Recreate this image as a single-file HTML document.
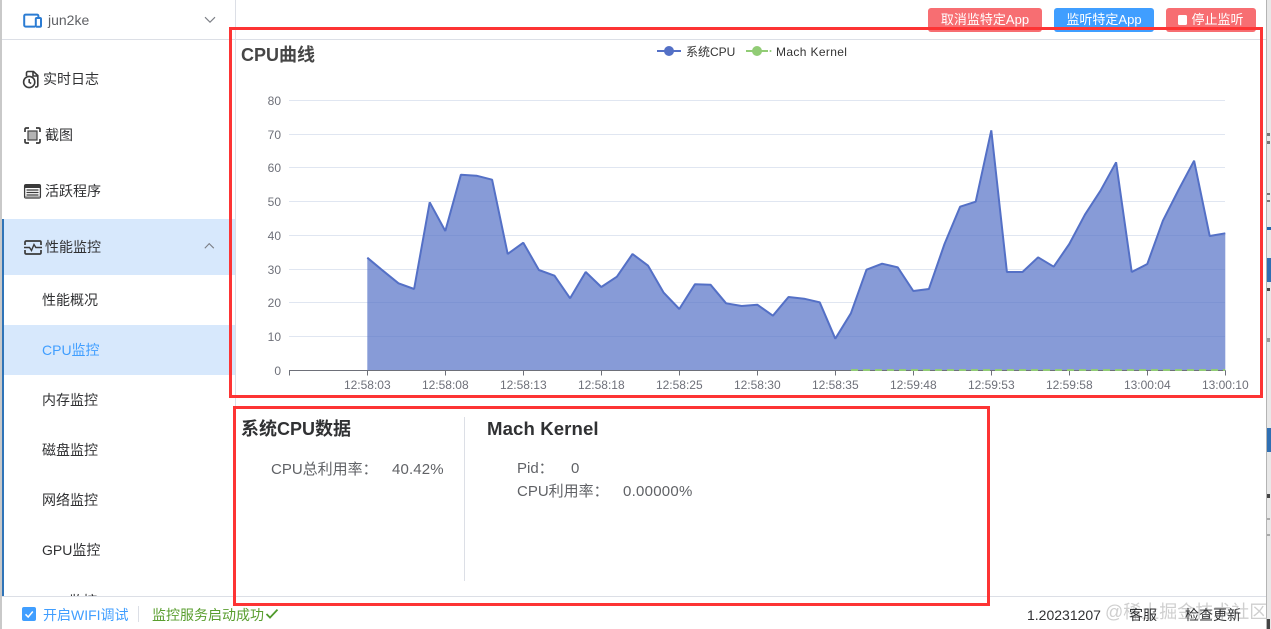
<!DOCTYPE html>
<html lang="zh"><head><meta charset="utf-8"><title>CPU监控</title>
<style>
html,body{margin:0;padding:0;width:1271px;height:629px;overflow:hidden;background:#fff}
body{position:relative;font-family:"Liberation Sans","Noto Sans CJK SC",sans-serif;font-size:14px;color:#303133}
.a{position:absolute}
.t{position:absolute;white-space:nowrap;line-height:20px;height:20px}
.btn{position:absolute;top:8px;height:24px;line-height:24px;border-radius:3px;color:#fff;font-size:13px;text-align:center;white-space:nowrap}
.h{font-size:18px;font-weight:bold;color:#303133}
.g{color:#606266;font-size:15px}
.bits{position:absolute;left:1267px;width:3px;background:#777}
svg{position:absolute;overflow:visible}
svg text{font-family:"Liberation Sans","Noto Sans CJK SC",sans-serif}
</style></head><body>

<!-- behind-window edges -->
<div class="a" style="left:0;top:0;width:2px;height:629px;background:#c9c9c9"></div>
<div class="a" style="left:2px;top:219px;width:2px;height:377px;background:#2f74b8"></div>
<div class="a" style="left:1266px;top:0;width:5px;height:629px;background:#e8e8e8;border-left:1px solid #b4b4b4;box-sizing:border-box"></div>
<div class="a" style="left:1267px;top:227px;width:4px;height:3px;background:#1f66ad"></div>
<div class="a" style="left:1267px;top:258px;width:4px;height:24px;background:#2f6fb3"></div>
<div class="a" style="left:1267px;top:428px;width:4px;height:24px;background:#2f6fb3"></div>
<div class="bits" style="top:133px;height:3px"></div>
<div class="bits" style="top:141px;height:3px"></div>
<div class="bits" style="top:193px;height:2px"></div>
<div class="bits" style="top:200px;height:2px"></div>
<div class="bits" style="top:288px;height:3px;background:#444"></div>
<div class="bits" style="top:338px;height:4px;background:#999"></div>
<div class="bits" style="top:494px;height:4px;background:#444"></div>
<div class="bits" style="top:518px;height:2px;background:#aaa"></div>
<div class="bits" style="top:534px;height:2px;background:#aaa"></div>
<div class="bits" style="top:619px;height:10px;background:#444"></div>

<!-- frame lines -->
<div class="a" style="left:235px;top:0;width:1px;height:596px;background:#dcdfe6"></div>
<div class="a" style="left:2px;top:39px;width:1264px;height:1px;background:#dcdfe6"></div>
<div class="a" style="left:2px;top:596px;width:1264px;height:1px;background:#dcdfe6"></div>

<!-- sidebar -->
<svg style="left:22px;top:12px" width="22" height="18" viewBox="0 0 22 18" fill="none" stroke="#2b7cd3" stroke-width="2">
<path d="M13 14.6H3.6A1.4 1.4 0 0 1 2.2 13.2V4A1.4 1.4 0 0 1 3.6 2.6H15A1.4 1.4 0 0 1 16.4 4V5.5"/>
<rect x="13.8" y="6" width="5.2" height="8.8" rx="1"/></svg>
<div class="t" style="left:48px;top:10px;color:#606266">jun2ke</div>
<svg style="left:204px;top:16px" width="12" height="8" fill="none" stroke="#7b7e85" stroke-width="1.1"><path d="M1 1.2L6 6.2L11 1.2"/></svg>

<svg style="left:22px;top:70px" width="18" height="19" viewBox="0 0 18 19" fill="none" stroke="#3a3a3a" stroke-width="1.6">
<path d="M4.5 6V3A1.5 1.5 0 0 1 6 1.5H11.5L15.8 5.5V15.5A1.5 1.5 0 0 1 14.3 17H13"/><path d="M11 1.5V6H15.8"/>
<circle cx="7.2" cy="12" r="5.6" fill="#fff"/><path d="M7.2 9V12.3L9.2 13.5"/></svg>
<div class="t" style="left:43px;top:69px">实时日志</div>

<svg style="left:24px;top:127px" width="17" height="17" viewBox="0 0 17 17" fill="none" stroke="#3a3a3a" stroke-width="1.7">
<path d="M1 5V2.2A1.2 1.2 0 0 1 2.2 1H5M12 1H14.8A1.2 1.2 0 0 1 16 2.2V5M16 12V14.8A1.2 1.2 0 0 1 14.8 16H12M5 16H2.2A1.2 1.2 0 0 1 1 14.8V12"/>
<rect x="4" y="4" width="9" height="9" fill="#b4b4b4" stroke="#444" stroke-width="1.2"/></svg>
<div class="t" style="left:45px;top:125px">截图</div>

<svg style="left:24px;top:184px" width="17" height="15" viewBox="0 0 17 15">
<rect x=".6" y=".6" width="15.8" height="13.4" rx="1.4" fill="#fff" stroke="#3a3a3a" stroke-width="1.3"/>
<rect x="1" y="1" width="15" height="3" fill="#3a3a3a"/>
<path d="M2.5 6H14.5M2.5 8.5H14.5M2.5 11H14.5" stroke="#3a3a3a" stroke-width="1.2"/>
<rect x="1" y="12.4" width="15" height="1.6" fill="#7a7a7a"/></svg>
<div class="t" style="left:45px;top:181px">活跃程序</div>

<div class="a" style="left:4px;top:219px;width:231px;height:56px;background:#d7e8fc"></div>
<svg style="left:24px;top:240px" width="18" height="15" viewBox="0 0 18 15" fill="none" stroke="#3a3a3a" stroke-width="1.7">
<path d="M1 5V2.2A1.2 1.2 0 0 1 2.2 1H15.8A1.2 1.2 0 0 1 17 2.2V5M1 10V12.8A1.2 1.2 0 0 0 2.2 14H15.8A1.2 1.2 0 0 0 17 12.8V10"/>
<path d="M0 7.5H5.5L7.5 10.5L10 4.5L11.8 7.5H18" stroke-width="1.4"/></svg>
<div class="t" style="left:45px;top:237px">性能监控</div>
<svg style="left:204px;top:242px" width="11" height="8" fill="none" stroke="#7b7e85" stroke-width="1.1"><path d="M.8 6.2L5.2 1.6L9.8 6.2"/></svg>

<div class="t" style="left:42px;top:290px">性能概况</div>
<div class="a" style="left:4px;top:325px;width:231px;height:50px;background:#d7e8fc"></div>
<div class="t" style="left:42px;top:340px;color:#409eff">CPU监控</div>
<div class="t" style="left:42px;top:390px">内存监控</div>
<div class="t" style="left:42px;top:440px">磁盘监控</div>
<div class="t" style="left:42px;top:490px">网络监控</div>
<div class="t" style="left:42px;top:540px">GPU监控</div>
<div class="a" style="left:42px;top:590px;width:70px;height:6px;overflow:hidden"><div class="t" style="left:0;top:1px">FPS监控</div></div>

<!-- buttons -->
<div class="btn" style="left:928px;width:114px;background:#f76e72">取消监特定App</div>
<div class="btn" style="left:1054px;width:100px;background:#409eff">监听特定App</div>
<div class="btn" style="left:1166px;width:90px;background:#f76e72"><span style="display:inline-block;width:9px;height:10px;background:#fff;border-radius:1.5px;margin-right:4px;vertical-align:-1px"></span>停止监听</div>

<!-- chart -->
<svg style="left:0;top:0" width="1271" height="629">
<text x="241" y="61" font-size="18" font-weight="bold" fill="#464646">CPU曲线</text>
<g stroke="#e0e6f1" stroke-width="1" fill="none">
<path d="M289 100.5H1225M289 134.5H1225M289 167.5H1225M289 201.5H1225M289 235.5H1225M289 269.5H1225M289 302.5H1225M289 336.5H1225"/>
</g>
<g font-size="12" fill="#6e7079" text-anchor="end">
<text x="281" y="105">80</text><text x="281" y="139">70</text><text x="281" y="172">60</text><text x="281" y="206">50</text><text x="281" y="240">40</text><text x="281" y="274">30</text><text x="281" y="307">20</text><text x="281" y="341">10</text><text x="281" y="375">0</text>
</g>
<path fill="#5470c6" fill-opacity=".7" d="M367.3 370.5L367.3 257.7L382.9 270.7L398.5 283.3L414.1 289L429.7 202.3L445.3 231L460.9 174.7L476.5 175.7L492.1 179.7L507.7 254L523.3 242.7L538.9 270L554.5 275.7L570.1 298.3L585.7 272L601.3 287L616.9 276.7L632.5 254L648.1 265.7L663.7 292.7L679.3 309L694.9 284.3L710.5 284.7L726.1 303.3L741.7 306L757.3 304.7L772.9 315.7L788.5 297L804.1 298.7L819.7 302.3L835.3 338.7L850.9 313.3L866.5 269.7L882.1 263.7L897.7 267.3L913.3 291L928.9 289L944.5 244L960.1 206.7L975.7 201.7L991.3 130.3L1006.9 272L1022.5 272L1038.1 257.3L1053.7 266.7L1069.3 244L1084.9 214.7L1100.5 190.7L1116.1 162.3L1131.7 272L1147.3 264L1162.9 220.7L1178.5 190L1194.1 160.7L1209.7 236L1225.3 233.3L1225.3 370.5Z"/>
<path fill="none" stroke="#6e7079" stroke-width="1" d="M289 370.5H1225.5M289.5 370.5V375.5M367.5 370.5V375.5M445.5 370.5V375.5M523.5 370.5V375.5M601.5 370.5V375.5M679.5 370.5V375.5M757.5 370.5V375.5M835.5 370.5V375.5M913.5 370.5V375.5M991.5 370.5V375.5M1069.5 370.5V375.5M1147.5 370.5V375.5M1225.5 370.5V375.5"/>
<path fill="none" stroke="#91cc75" stroke-width="2" stroke-dasharray="7 5" d="M851 370H1225"/>
<path fill="none" stroke="#5470c6" stroke-width="2" stroke-linejoin="bevel" d="M367.3 257.7L382.9 270.7L398.5 283.3L414.1 289L429.7 202.3L445.3 231L460.9 174.7L476.5 175.7L492.1 179.7L507.7 254L523.3 242.7L538.9 270L554.5 275.7L570.1 298.3L585.7 272L601.3 287L616.9 276.7L632.5 254L648.1 265.7L663.7 292.7L679.3 309L694.9 284.3L710.5 284.7L726.1 303.3L741.7 306L757.3 304.7L772.9 315.7L788.5 297L804.1 298.7L819.7 302.3L835.3 338.7L850.9 313.3L866.5 269.7L882.1 263.7L897.7 267.3L913.3 291L928.9 289L944.5 244L960.1 206.7L975.7 201.7L991.3 130.3L1006.9 272L1022.5 272L1038.1 257.3L1053.7 266.7L1069.3 244L1084.9 214.7L1100.5 190.7L1116.1 162.3L1131.7 272L1147.3 264L1162.9 220.7L1178.5 190L1194.1 160.7L1209.7 236L1225.3 233.3"/>
<g font-size="12" fill="#6e7079" text-anchor="middle">
<text x="367.3" y="389">12:58:03</text><text x="445.3" y="389">12:58:08</text><text x="523.3" y="389">12:58:13</text><text x="601.3" y="389">12:58:18</text><text x="679.3" y="389">12:58:25</text><text x="757.3" y="389">12:58:30</text><text x="835.3" y="389">12:58:35</text><text x="913.3" y="389">12:59:48</text><text x="991.3" y="389">12:59:53</text><text x="1069.3" y="389">12:59:58</text><text x="1147.3" y="389">13:00:04</text><text x="1225.3" y="389">13:00:10</text>
</g>
<!-- legend -->
<path d="M657 51H681" stroke="#5470c6" stroke-width="2"/><circle cx="669" cy="51" r="5" fill="#5470c6"/>
<text x="686" y="56" font-size="12" fill="#333">系统CPU</text>
<path d="M746 51H768" stroke="#91cc75" stroke-width="2"/><circle cx="757" cy="51" r="5" fill="#91cc75"/>
<circle cx="770.5" cy="51" r="1" fill="#91cc75"/>
<text x="776" y="56" font-size="12" fill="#333" letter-spacing=".36">Mach Kernel</text>
</svg>

<!-- detail panels -->
<div class="t h" style="left:241px;top:419px">系统CPU数据</div>
<div class="t g" style="left:271px;top:460px">CPU总利用率：</div>
<div class="t g" style="left:392px;top:460px;letter-spacing:.15px">40.42%</div>
<div class="a" style="left:464px;top:417px;width:1px;height:164px;background:#dcdfe6"></div>
<div class="t h" style="left:487px;top:419px;letter-spacing:.1px;font-size:18.6px">Mach Kernel</div>
<div class="t g" style="left:517px;top:459px">Pid：</div>
<div class="t g" style="left:571px;top:459px">0</div>
<div class="t g" style="left:517px;top:482px">CPU利用率：</div>
<div class="t g" style="left:623px;top:482px;letter-spacing:.25px">0.00000%</div>

<!-- footer -->
<div class="a" style="left:22px;top:607px;width:14px;height:14px;background:#409eff;border-radius:2px"></div>
<svg style="left:22px;top:607px" width="14" height="14" fill="none" stroke="#fff" stroke-width="1.5"><path d="M3.5 7.3L6.2 10L10.8 4.5"/></svg>
<div class="t" style="left:43px;top:605px;color:#409eff">开启WIFI调试</div>
<div class="a" style="left:138px;top:606px;width:1px;height:16px;background:#dcdfe6"></div>
<div class="t" style="left:152px;top:605px;color:#5a9e2f">监控服务启动成功</div>
<svg style="left:265px;top:608px" width="14" height="12" fill="none" stroke="#4f9a2b" stroke-width="1.8"><path d="M1.5 6L5 9.6L12.5 1.6"/></svg>
<div class="t" style="left:1105px;top:602px;font-size:18px;color:#cfcfcf">@稀土掘金技术社区</div>
<div class="t" style="left:1027px;top:605px">1.20231207</div>
<div class="t" style="left:1129px;top:605px">客服</div>
<div class="t" style="left:1185px;top:605px">检查更新</div>

<!-- annotation rectangles -->
<div class="a" style="left:229px;top:27px;width:1034px;height:371px;border:3px solid #fd3434;box-sizing:border-box"></div>
<div class="a" style="left:233px;top:406px;width:757px;height:200px;border:3px solid #fd3434;box-sizing:border-box"></div>
</body></html>
